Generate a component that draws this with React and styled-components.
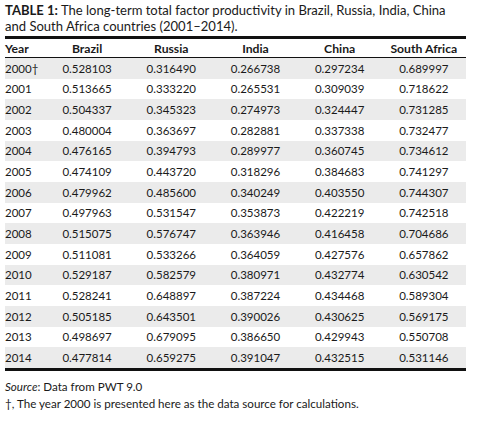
import React from "react";
import styled, { createGlobalStyle } from "styled-components";

const Global = createGlobalStyle`
  html, body { margin: 0; padding: 0; background: #fff; }
  body { font-family: Lato, "Open Sans", sans-serif; color: #1a1a1a; }
`;

const Page = styled.div`
  width: 479px;
  height: 425px;
  padding: 2px 13px 0 5px;
  box-sizing: border-box;
`;

const Caption = styled.div`
  font-size: 13.05px;
  line-height: 16px;
  color: #1a1a1a;
  white-space: nowrap;
  margin-bottom: 2px;
  b { font-weight: 700; }
`;

const Table = styled.div`
  width: 461px;
  border-top: 3px solid #111;
  border-bottom: 3px solid #111;
`;

const Row = styled.div`
  display: grid;
  grid-template-columns: 40px repeat(5, 84.2px);
  align-items: center;
  height: ${(p) => (p.$head ? "18px" : "20.67px")};
  background: ${(p) => (p.$shade ? "#ebebeb" : "#fff")};
  font-size: ${(p) => (p.$head ? "12.2px" : "11.5px")};
  font-weight: ${(p) => (p.$head ? 700 : 400)};
  border-bottom: ${(p) => (p.$head ? "1px solid #111" : "none")};
`;

const Cell = styled.div`
  text-align: ${(p) => (p.$left ? "left" : "center")};
  white-space: nowrap;
`;

const Notes = styled.div`
  margin-top: 7px;
  font-size: 11.6px;
  line-height: 17px;
  color: #1a1a1a;
  i { font-style: italic; }
`;

const data = [
  ["2000†", "0.528103", "0.316490", "0.266738", "0.297234", "0.689997"],
  ["2001", "0.513665", "0.333220", "0.265531", "0.309039", "0.718622"],
  ["2002", "0.504337", "0.345323", "0.274973", "0.324447", "0.731285"],
  ["2003", "0.480004", "0.363697", "0.282881", "0.337338", "0.732477"],
  ["2004", "0.476165", "0.394793", "0.289977", "0.360745", "0.734612"],
  ["2005", "0.474109", "0.443720", "0.318296", "0.384683", "0.741297"],
  ["2006", "0.479962", "0.485600", "0.340249", "0.403550", "0.744307"],
  ["2007", "0.497963", "0.531547", "0.353873", "0.422219", "0.742518"],
  ["2008", "0.515075", "0.576747", "0.363946", "0.416458", "0.704686"],
  ["2009", "0.511081", "0.533266", "0.364059", "0.427576", "0.657862"],
  ["2010", "0.529187", "0.582579", "0.380971", "0.432774", "0.630542"],
  ["2011", "0.528241", "0.648897", "0.387224", "0.434468", "0.589304"],
  ["2012", "0.505185", "0.643501", "0.390026", "0.430625", "0.569175"],
  ["2013", "0.498697", "0.679095", "0.386650", "0.429943", "0.550708"],
  ["2014", "0.477814", "0.659275", "0.391047", "0.432515", "0.531146"],
];

const headers = ["Year", "Brazil", "Russia", "India", "China", "South Africa"];

export default function App() {
  return (
    <Page>
      <Global />
      <Caption>
        <b>TABLE 1:</b> The long-term total factor productivity in Brazil, Russia, India, China
        <br />
        and South Africa countries (2001–2014).
      </Caption>
      <Table>
        <Row $head>
          {headers.map((h, i) => (
            <Cell key={h} $left={i === 0}>{h}</Cell>
          ))}
        </Row>
        {data.map((r, ri) => (
          <Row key={r[0]} $shade={ri % 2 === 0}>
            {r.map((c, i) => (
              <Cell key={i} $left={i === 0}>{c}</Cell>
            ))}
          </Row>
        ))}
      </Table>
      <Notes>
        <div><i>Source</i>: Data from PWT 9.0</div>
        <div>†, The year 2000 is presented here as the data source for calculations.</div>
      </Notes>
    </Page>
  );
}
